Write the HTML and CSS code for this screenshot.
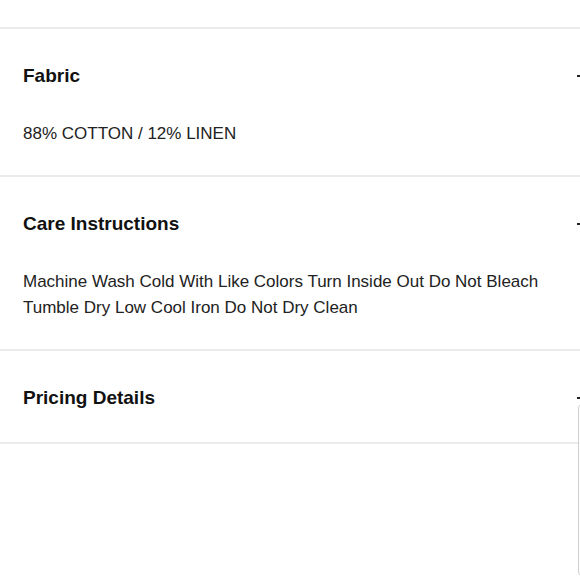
FILE: index.html
```html
<!DOCTYPE html>
<html lang="en">
<head>
<meta charset="utf-8">
<title>Product details</title>
<link rel="stylesheet" href="styles.css">
</head>
<body>
<div class="page">
  <div class="top-section"></div>
  <section class="panel">
    <div class="panel-head">
      <h2 class="panel-title">Fabric</h2>
      <span class="toggle" aria-hidden="true"></span>
    </div>
    <p class="panel-body">88% COTTON / 12% LINEN</p>
  </section>
  <section class="panel">
    <div class="panel-head">
      <h2 class="panel-title">Care Instructions</h2>
      <span class="toggle" aria-hidden="true"></span>
    </div>
    <p class="panel-body">Machine Wash Cold With Like Colors Turn Inside Out Do Not Bleach Tumble Dry Low Cool Iron Do Not Dry Clean</p>
  </section>
  <section class="panel panel-last">
    <div class="panel-head">
      <h2 class="panel-title">Pricing Details</h2>
      <span class="toggle" aria-hidden="true"></span>
    </div>
  </section>
</div>
<div class="floating-card"></div>
</body>
</html>
```
FILE: styles.css
```css
html, body {
  margin: 0;
  padding: 0;
  background: #fff;
  overflow: hidden;
}
body {
  font-family: "Liberation Sans", Arial, sans-serif;
  color: #222;
  width: 580px;
  height: 580px;
  position: relative;
}
.page {
  width: 612px;
}
.top-section {
  height: 27px;
  border-bottom: 2px solid #ebebeb;
}
.panel {
  padding: 33px 23px 28px 23px;
  border-bottom: 2px solid #ebebeb;
}
.panel-last {
  padding-bottom: 30px;
}
.panel-head {
  display: flex;
  align-items: center;
  justify-content: space-between;
  height: 28px;
}
.panel-title {
  margin: 0;
  font-size: 19px;
  line-height: 28px;
  font-weight: 700;
  color: #111;
}
.toggle {
  width: 12px;
  height: 2px;
  background: #222;
}
.panel-body {
  margin: 31px 0 0 0;
  font-size: 17px;
  line-height: 26px;
  color: #222;
  width: 535px;
}
.floating-card {
  position: absolute;
  left: 578px;
  top: 404px;
  width: 200px;
  height: 170px;
  border: 1px solid #cfcfcf;
  border-radius: 4px;
  background: #fff;
}
```
